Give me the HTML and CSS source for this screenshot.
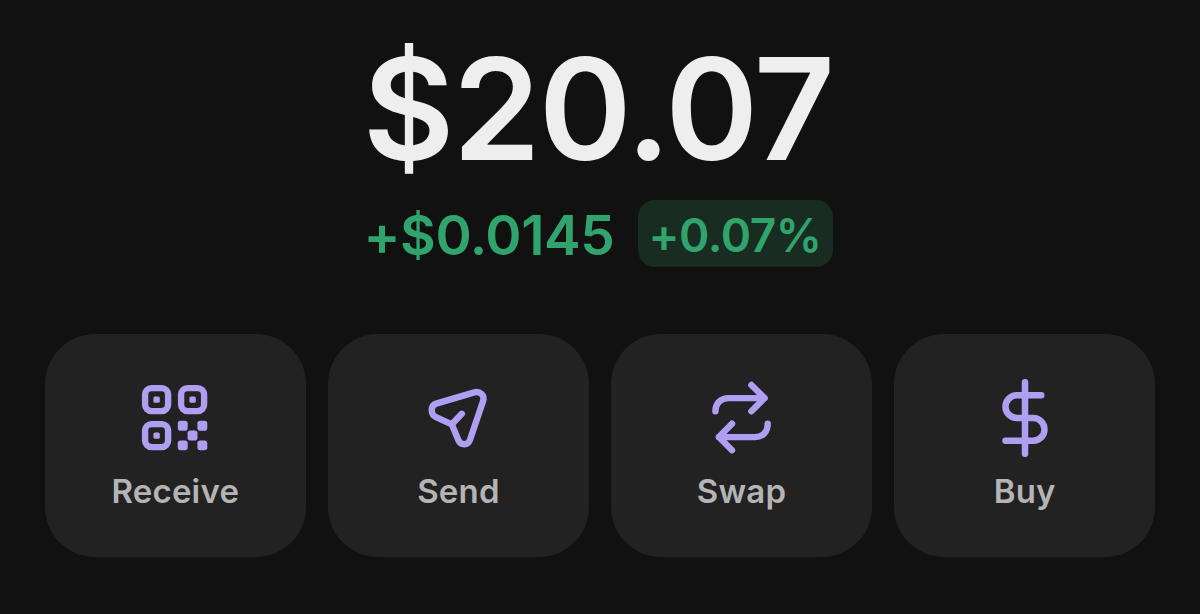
FILE: index.html
```html
<!DOCTYPE html>
<html lang="en">
<head>
  <meta charset="UTF-8" />
  <meta name="viewport" content="width=device-width, initial-scale=1.0"/>
  <title>Wallet</title>
  <link rel="stylesheet" href="styles.css">
</head>
<body>
  <main class="wallet">
    <section class="balance">
      <div class="total">$20.07</div>
      <div class="change">
        <span class="amount">+$0.0145</span>
        <span class="percent">+0.07%</span>
      </div>
    </section>

    <nav class="actions">
      <button class="action">
        <svg class="icon" viewBox="0 0 78 78">
          <rect x="9.1" y="9.1" width="23" height="23" rx="6.5"/>
          <rect x="45.1" y="9.1" width="23" height="23" rx="6.5"/>
          <rect x="9.1" y="45.1" width="23" height="23" rx="6.5"/>
          <g class="solid">
            <rect x="17.4" y="17.4" width="6.4" height="6.4" rx="1.6"/>
            <rect x="53.4" y="17.4" width="6.4" height="6.4" rx="1.6"/>
            <rect x="17.4" y="53.4" width="6.4" height="6.4" rx="1.6"/>
            <rect x="41.8" y="41.8" width="9.9" height="9.9" rx="2.8"/>
            <rect x="61.4" y="41.8" width="9.9" height="9.9" rx="2.8"/>
            <rect x="51.6" y="51.6" width="9.9" height="9.9" rx="2.8"/>
            <rect x="41.8" y="61.4" width="9.9" height="9.9" rx="2.8"/>
            <rect x="61.4" y="61.4" width="9.9" height="9.9" rx="2.8"/>
          </g>
        </svg>
        <span class="label">Receive</span>
      </button>
      <button class="action">
        <svg class="icon" viewBox="0 0 78 78">
          <path d="M17.2 24.6L55.3 13.4C60.8 11.9 65.8 16.3 64.2 21.8L51 60.8C49 66.6 41.8 66.7 39.4 61.2L32.8 45.3L17 38.2C11.2 35.6 11.3 26.4 17.2 24.6Z"/>
          <path d="M32.8 45.3L42.8 34.8"/>
        </svg>
        <span class="label">Send</span>
      </button>
      <button class="action">
        <svg class="icon" viewBox="0 0 78 78">
          <path d="M12.4 32.3C12.4 24.5 17.5 19.1 25.5 19.1H61.4"/>
          <path d="M48.4 6L61.5 19.1L48.4 32.3"/>
          <path d="M64.7 44.7C64.7 52.6 60 58.1 52 58.1H16"/>
          <path d="M29 44.7L15.9 58.1L29 71.3"/>
        </svg>
        <span class="label">Swap</span>
      </button>
      <button class="action">
        <svg class="icon" viewBox="0 0 24 24">
          <path class="thin" d="M12 1V23M17 5H9.5a3.5 3.5 0 0 0 0 7H14.5a3.5 3.5 0 0 1 0 7H6"/>
        </svg>
        <span class="label">Buy</span>
      </button>
    </nav>
  </main>
</body>
</html>
```
FILE: styles.css
```css
body {
  margin: 0;
  height: 614px;
  font-family: Inter, sans-serif;
  font-feature-settings: "calt" 0;
  background-color: #111;
  color: #eee;
  overflow: hidden;
}

.wallet {
  padding: 24px 45px 0;
}

.balance {
  display: flex;
  flex-direction: column;
  align-items: center;
}

.total {
  height: 170px;
  margin-right: 4px;
  font-size: 141px;
  line-height: 170px;
  font-weight: 600;
  letter-spacing: -1.8px;
}

.change {
  display: flex;
  align-items: center;
  gap: 23px;
  height: 67px;
  margin: 6px 4px 0 0;
  color: #30a46c;
  font-weight: 600;
}

.amount {
  font-size: 55px;
  line-height: 67px;
  padding-top: 3px;
  letter-spacing: -0.4px;
}

.percent {
  box-sizing: border-box;
  width: 195px;
  height: 67px;
  border-radius: 17px;
  background: #182c22;
  font-size: 46px;
  line-height: 70px;
  letter-spacing: -0.4px;
  text-align: center;
}

.actions {
  display: grid;
  grid-template-columns: repeat(4, 1fr);
  gap: 22.6px;
  margin-top: 67px;
}

.action {
  display: flex;
  flex-direction: column;
  align-items: center;
  height: 223px;
  padding: 45px 0 0;
  border: none;
  border-radius: 50px;
  background: #222;
  color: #b4b4b4;
  font-family: inherit;
  cursor: pointer;
}

.icon {
  width: 78px;
  height: 78px;
  fill: none;
  stroke: #af9ff2;
  stroke-width: 6.4;
  stroke-linecap: round;
  stroke-linejoin: round;
}

.solid {
  fill: #af9ff2;
  stroke: none;
}

.thin {
  stroke-width: 2;
}

.label {
  margin-top: 14px;
  font-size: 33px;
  line-height: 40px;
  font-weight: 600;
  letter-spacing: 0.2px;
}
```
